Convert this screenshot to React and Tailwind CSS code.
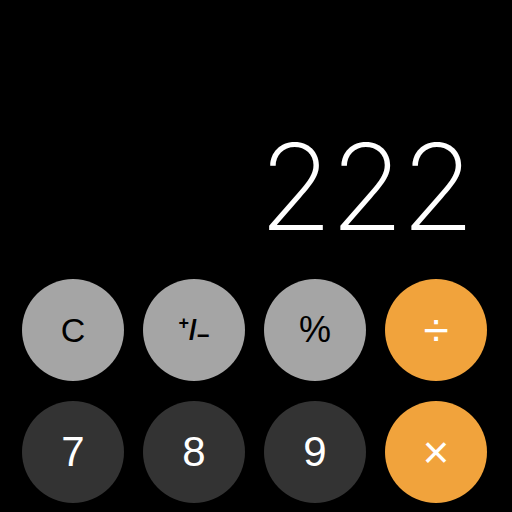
import React from "react";

const rows = [
  [
    { label: "C", kind: "gray" },
    { label: "+/-", kind: "gray" },
    { label: "%", kind: "gray" },
    { label: "÷", kind: "orange" },
  ],
  [
    { label: "7", kind: "dark" },
    { label: "8", kind: "dark" },
    { label: "9", kind: "dark" },
    { label: "×", kind: "orange" },
  ],
];

const styles = {
  gray: "bg-[#a5a5a5] text-black text-[34px]",
  dark: "bg-[#333333] text-white text-[42px]",
  orange: "bg-[#f1a33c] text-white text-[46px]",
};

const Key = ({ label, kind }) => {
  let content = label;
  if (label === "+/-") {
    content = (
      <span className="flex items-center font-semibold">
        <span className="text-[18px] -mt-[14px]">+</span>
        <span className="text-[28px]">/</span>
        <span className="text-[22px] mt-[12px]">−</span>
      </span>
    );
  }
  if (label === "%") {
    content = <span className="font-medium text-[36px]">%</span>;
  }
  return (
    <button
      className={`w-[102px] h-[102px] rounded-full flex items-center justify-center leading-none ${styles[kind]}`}
    >
      {content}
    </button>
  );
};

export default function App() {
  return (
    <div
      className="w-[512px] h-[512px] bg-black flex flex-col justify-end pb-[9px] overflow-hidden"
      style={{ fontFamily: "'Liberation Sans', Arial, sans-serif" }}
    >
      <div className="flex justify-end pr-[40px] mb-[32px]">
        <span
          className="text-white text-[120px] leading-none font-extralight tracking-[-3px]"
          style={{ fontFamily: "Inter, 'Liberation Sans', sans-serif" }}
        >
          222
        </span>
      </div>
      <div className="flex flex-col gap-[20px] pl-[22px]">
        {rows.map((row, i) => (
          <div key={i} className="flex gap-[19px]">
            {row.map((k) => (
              <Key key={k.label} {...k} />
            ))}
          </div>
        ))}
      </div>
    </div>
  );
}
